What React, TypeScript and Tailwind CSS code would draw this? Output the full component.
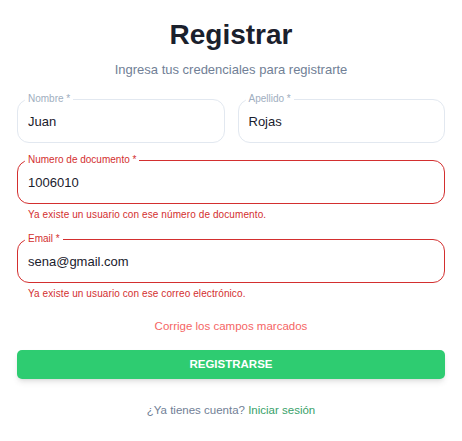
import React from "react";

type FieldProps = {
  label: string;
  value: string;
  error?: string;
};

function Field({ label, value, error }: FieldProps) {
  const bad = !!error;
  return (
    <div className="flex flex-col">
      <div
        className={
          bad
            ? "relative h-[44px] rounded-xl border border-[#d32f2f] flex items-center"
            : "relative h-[44px] rounded-xl border border-[#e2e8f0] flex items-center"
        }
      >
        <span
          className={
            bad
              ? "absolute left-[7px] top-[-7px] px-[3px] bg-white text-[10px] leading-[12px] text-[#d32f2f]"
              : "absolute left-[7px] top-[-7px] px-[3px] bg-white text-[10px] leading-[12px] text-[#a0aec0]"
          }
        >
          {label} *
        </span>
        <input
          defaultValue={value}
          className="w-full h-full bg-transparent pl-[10px] pr-3 text-[13px] text-[#1a202c] outline-none"
        />
      </div>
      {error && (
        <p className="mt-[4px] ml-[11px] text-[10px] leading-[14px] tracking-[0.1px] text-[#d32f2f]">{error}</p>
      )}
    </div>
  );
}

export default function App() {
  return (
    <div className="min-h-screen bg-white font-['Liberation_Sans',Arial,sans-serif]">
      <div className="w-[428px] mx-auto pt-[18px] flex flex-col">
        <h1 className="text-center text-[28px] leading-[34px] font-bold text-[#1a202c]">Registrar</h1>
        <p className="mt-[8px] text-center text-[13px] leading-[20px] text-[#718096]">
          Ingresa tus credenciales para registrarte
        </p>

        <div className="mt-[19px] grid grid-cols-2 gap-[13px]">
          <Field label="Nombre" value="Juan" />
          <Field label="Apellido" value="Rojas" />
        </div>

        <div className="mt-[17px]">
          <Field
            label="Numero de documento"
            value="1006010"
            error="Ya existe un usuario con ese número de documento."
          />
        </div>

        <div className="mt-[17px]">
          <Field label="Email" value="sena@gmail.com" error="Ya existe un usuario con ese correo electrónico." />
        </div>

        <p className="mt-[17px] text-center text-[11.5px] leading-[16px] text-[#f56565]">Corrige los campos marcados</p>

        <button className="mt-[16px] h-[29px] rounded-[5px] bg-[#2ecc71] text-white text-[11.5px] font-bold shadow-md">
          REGISTRARSE
        </button>

        <p className="mt-[23px] text-center text-[11.5px] leading-[16px] text-[#718096]">
          ¿Ya tienes cuenta? <a className="text-[#38a169] cursor-pointer">Iniciar sesión</a>
        </p>
      </div>
    </div>
  );
}
